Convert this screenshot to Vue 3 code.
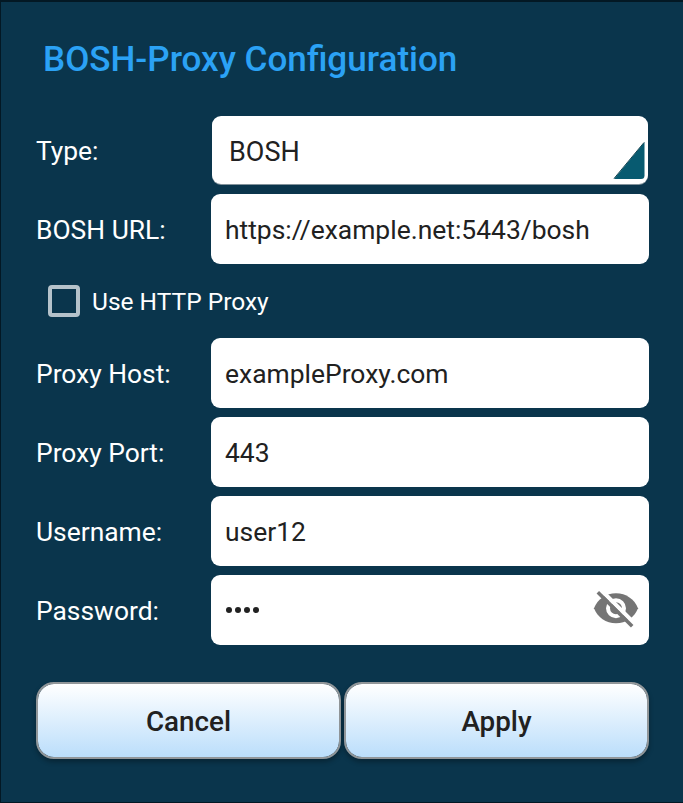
<script setup>
import { ref } from 'vue'
const fields = ref([
  { label: 'Proxy Host:', value: 'exampleProxy.com', kind: 'host' },
  { label: 'Proxy Port:', value: '443', kind: 'port' },
  { label: 'Username:', value: 'user12', kind: 'user' },
])
</script>

<template>
  <main class="dialog">
    <h1><span>BOSH-Proxy Configuration</span></h1>
    <div class="row type-row">
      <label>Type:</label>
      <div class="field select">
        <span>BOSH</span>
        <svg class="corner" width="33" height="39" viewBox="0 0 33 39">
          <path d="M31.5 0V33.500Q31.500 37 28 37H1Z" fill="#075a70" />
          <path d="M31 0.500L1 36.500" stroke="#174653" stroke-width="1" />
        </svg>
      </div>
    </div>
    <div class="row">
      <label>BOSH URL:</label>
      <div class="field"><span>https://example.net:5443/bosh</span></div>
    </div>
    <div class="check-row">
      <span class="box"></span>
      <span class="check-label">Use HTTP Proxy</span>
    </div>
    <div class="rows">
      <div v-for="f in fields" :key="f.kind" class="row">
        <label>{{ f.label }}</label>
        <div class="field"><span>{{ f.value }}</span></div>
      </div>
      <div class="row">
        <label>Password:</label>
        <div class="field">
          <span class="dots"><i v-for="n in 4" :key="n"></i></span>
          <svg class="eye" width="48" height="40" viewBox="0 0 48 40">
            <path d="M2 20.3C5.5 11.3 14 5.3 24 5.3S42.5 11.3 46 20.3C42.5 29.3 34 35.3 24 35.3S5.5 29.3 2 20.3Z" fill="#757575" />
            <circle cx="24" cy="20.3" r="8" fill="none" stroke="#fff" stroke-width="4" />
            <path d="M8.5 1.5L43 36" stroke="#fff" stroke-width="4" />
            <path d="M5.8 4.2L40.2 38.2" stroke="#757575" stroke-width="3.600" />
          </svg>
        </div>
      </div>
    </div>
    <div class="actions">
      <button>Cancel</button>
      <button>Apply</button>
    </div>
  </main>
</template>

<style>
body { margin: 0; }
</style>

<style scoped>
.dialog {
  box-sizing: border-box;
  width: 683px;
  height: 803px;
  padding: 0 34px 0 35px;
  border: solid #031824;
  border-width: 2px 0 1px 1px;
  background: #0a354c;
  font-family: Roboto, sans-serif;
  color: #fff;
  overflow: hidden;
}
h1 {
  margin: 0;
  padding: 37px 0 0 7px;
  height: 77px;
  font-size: 35.05px;
  line-height: 41px;
  font-weight: 500;
  color: #2ba2f5;
  white-space: nowrap;
}
.row {
  display: grid;
  grid-template-columns: 175px 438px;
  align-items: center;
  height: 70px;
  font-size: 26.45px;
}
.row label { padding-top: 1px; font-size: 26.4px; }
.type-row { height: 68px; margin-bottom: 10px; }
.field {
  box-sizing: border-box;
  height: 100%;
  display: flex;
  align-items: center;
  justify-content: space-between;
  padding: 1px 9px 0 14px;
  background: #fff;
  color: #212121;
  border-radius: 9px;
}
.select {
  margin: 0 1px;
  padding: 2px 2px 0 17px;
  box-shadow: 0 1px 0 #82929b;
}
.select span { padding-top: 2px; font-size: 27px; }
.corner { align-self: flex-end; margin-bottom: 3px; }
.eye { margin-bottom: 5px; }
.check-row {
  display: flex;
  align-items: center;
  height: 74px;
  padding-left: 12px;
  gap: 12px;
  font-size: 24.5px;
}
.box {
  box-sizing: border-box;
  width: 32px;
  height: 32px;
  border: 4px solid #b5c2ca;
  border-radius: 4px;
}
.rows { display: grid; gap: 9px; }
.dots { display: flex; gap: 3px; padding: 0 0 2px 1px; }
.dots i { width: 6px; height: 6px; border-radius: 50%; background: #212121; }
.actions {
  display: grid;
  grid-template-columns: 305px 305px;
  gap: 3px;
  margin-top: 37px;
}
button {
  box-sizing: border-box;
  height: 77px;
  padding: 2px 0 0;
  border: 2px solid #919699;
  border-radius: 18px;
  background: linear-gradient(#fff, #bbdefb) padding-box;
  box-shadow: 0 3px 5px rgba(0, 0, 0, 0.3);
  font: 500 27.8px Roboto, sans-serif;
  color: #212121;
}
</style>
